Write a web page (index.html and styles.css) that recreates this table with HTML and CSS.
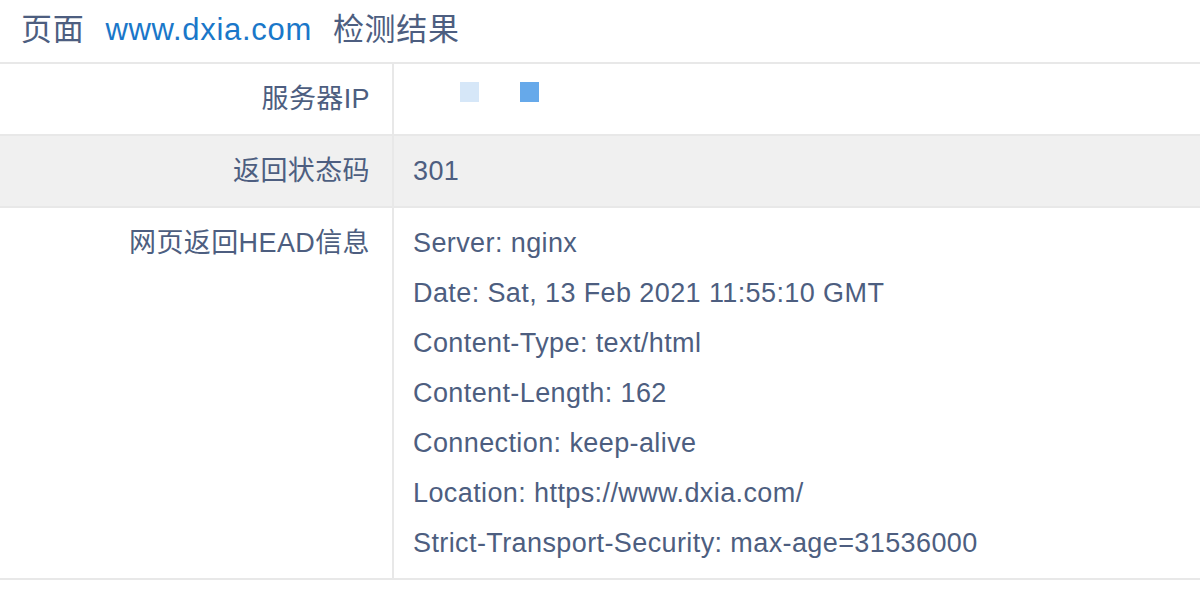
FILE: index.html
```
<!DOCTYPE html>
<html lang="zh-CN">
<head>
<meta charset="utf-8">
<title>页面检测结果</title>
<link rel="stylesheet" href="styles.css">
</head>
<body>
<h1 class="title"><span>页面</span><a class="url" href="#">www.dxia.com</a><span>检测结果</span></h1>
<table class="result">
  <tr>
    <th>服务器IP</th>
    <td><div class="ip"><span class="px px-light"></span><span class="px px-blue"></span></div></td>
  </tr>
  <tr class="alt">
    <th>返回状态码</th>
    <td>301</td>
  </tr>
  <tr>
    <th>网页返回HEAD信息</th>
    <td>
      <div>Server: nginx</div>
      <div>Date: Sat, 13 Feb 2021 11:55:10 GMT</div>
      <div>Content-Type: text/html</div>
      <div>Content-Length: 162</div>
      <div>Connection: keep-alive</div>
      <div>Location: https://www.dxia.com/</div>
      <div>Strict-Transport-Security: max-age=31536000</div>
    </td>
  </tr>
</table>
</body>
</html>
```
FILE: styles.css
```
html, body {
  margin: 0;
  padding: 0;
  background: #ffffff;
}
body {
  font-family: "Liberation Sans", "Noto Sans CJK SC", sans-serif;
  color: #4d5e80;
}
.title {
  margin: 0;
  height: 62px;
  padding-left: 21px;
  font-size: 31px;
  letter-spacing: 0.7px;
  font-weight: normal;
  line-height: 60px;
  display: flex;
  gap: 21px;
}
.url {
  color: #1a77c9;
  text-decoration: none;
}
.result {
  width: 100%;
  border-collapse: collapse;
  border-top: 2px solid #e8e8e8;
  font-size: 27px;
  letter-spacing: 0.4px;
}
.result th,
.result td {
  padding: 10px 0;
  line-height: 50px;
  vertical-align: top;
  border-bottom: 2px solid #e8e8e8;
}
.result th {
  width: 370px;
  padding-right: 22px;
  text-align: right;
  font-weight: normal;
  border-right: 2px solid #e8e8e8;
}
.result td {
  padding-left: 19px;
  text-align: left;
}
.alt th,
.alt td {
  background: #f0f0f0;
}
.ip {
  display: flex;
  height: 50px;
  align-items: flex-start;
  padding-top: 8px;
  box-sizing: border-box;
  padding-left: 47px;
  gap: 41px;
}
.px {
  width: 19px;
  height: 20px;
}
.px-light { background: #d6e7f8; }
.px-blue { background: #66a9ea; }
```
